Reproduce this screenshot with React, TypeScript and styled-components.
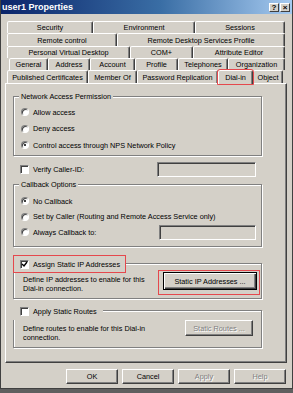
import React from "react";
import styled, { createGlobalStyle, css } from "styled-components";

const FACE = "#d4d0c8";
const RED = "#e5484d";

const GlobalStyle = createGlobalStyle`
  html, body {
    margin: 0;
    padding: 0;
    background: #5f5f5f;
  }
  body {
    font-family: "Liberation Sans", Arial, sans-serif;
    font-size: 7.3px;
    color: #000;
  }
  * {
    box-sizing: border-box;
  }
`;

type TabRowData = {
  indent: number;
  height: number;
  tabs: [string, number][];
};

const tabRows: TabRowData[] = [
  { indent: 2, height: 12, tabs: [["Security", 86], ["Environment", 102], ["Sessions", 90]] },
  { indent: 2, height: 13, tabs: [["Remote control", 110], ["Remote Desktop Services Profile", 168]] },
  { indent: 2, height: 12, tabs: [["Personal Virtual Desktop", 123], ["COM+", 63], ["Attribute Editor", 92]] },
  {
    indent: 4,
    height: 12,
    tabs: [["General", 39], ["Address", 42], ["Account", 45], ["Profile", 43], ["Telephones", 50], ["Organization", 57]],
  },
  {
    indent: 2,
    height: 13,
    tabs: [["Published Certificates", 81], ["Member Of", 49], ["Password Replication", 81], ["Dial-in", 35], ["Object", 30]],
  },
];

const CheckMark = () => (
  <svg width="7" height="7" viewBox="0 0 7 7">
    <path d="M1 3 L3 5 L6 1" stroke="#000" strokeWidth="1.4" fill="none" />
  </svg>
);

const App = () => {
  return (
    <>
      <GlobalStyle />
      <Window>
        <TitleBar>
          <Title>user1 Properties</Title>
          <Caption>
            <CaptionButton>?</CaptionButton>
            <CaptionButton>×</CaptionButton>
          </Caption>
        </TitleBar>

        <Body>
          <TabStrip>
            {tabRows.map((row, i) => (
              <TabRow key={i} $indent={row.indent} $height={row.height}>
                {row.tabs.map(([label, w]) => (
                  <Tab key={label} $w={w} $active={label === "Dial-in"}>
                    {label}
                  </Tab>
                ))}
              </TabRow>
            ))}
          </TabStrip>

          <Panel>
            <Group $top={12} $padTop={7} $padBottom={2}>
              <Legend>Network Access Permission</Legend>
              <OptionRow $h={16}>
                <Radio />
                Allow access
              </OptionRow>
              <OptionRow $h={17}>
                <Radio />
                Deny access
              </OptionRow>
              <OptionRow $h={16}>
                <Radio $checked />
                Control access through NPS Network Policy
              </OptionRow>
            </Group>

            <CallerRow>
              <Check />
              Verify Caller-ID:
              <TextBox $w={99} />
            </CallerRow>

            <Group $top={7} $padTop={8} $padBottom={6}>
              <Legend>Callback Options</Legend>
              <OptionRow $h={16}>
                <Radio $checked />
                No Callback
              </OptionRow>
              <OptionRow $h={15}>
                <Radio />
                Set by Caller (Routing and Remote Access Service only)
              </OptionRow>
              <OptionRow $h={16}>
                <Radio />
                Always Callback to:
                <TextBox $w={97} $right={5} />
              </OptionRow>
            </Group>

            <Group $top={16} $padTop={8} $padBottom={8}>
              <CheckLegend $marked>
                <Check $checked>
                  <CheckMark />
                </Check>
                Assign Static IP Addresses
              </CheckLegend>
              <DetailRow $h={18} $textTop={3} $padRight={4}>
                <Detail>
                  Define IP addresses to enable for this
                  <br />
                  Dial-in connection.
                </Detail>
                <RedFrame>
                  <PushButton $w={94} $h={18} $default>
                    Static IP Addresses ...
                  </PushButton>
                </RedFrame>
              </DetailRow>
            </Group>

            <Group $top={11} $padTop={9} $padBottom={11}>
              <CheckLegend>
                <Check />
                Apply Static Routes
              </CheckLegend>
              <DetailRow $h={16} $textTop={4} $padRight={8}>
                <Detail>
                  Define routes to enable for this Dial-in
                  <br />
                  connection.
                </Detail>
                <PushButton $w={68} $h={16} disabled>
                  Static Routes ...
                </PushButton>
              </DetailRow>
            </Group>
          </Panel>

          <ButtonBar>
            <PushButton $w={52} $h={15}>
              OK
            </PushButton>
            <PushButton $w={52} $h={15}>
              Cancel
            </PushButton>
            <PushButton $w={52} $h={15} disabled>
              Apply
            </PushButton>
            <PushButton $w={52} $h={15} disabled>
              Help
            </PushButton>
          </ButtonBar>
        </Body>
      </Window>
    </>
  );
};

export default App;

const Window = styled.div`
  width: 293px;
  height: 389px;
  background: ${FACE};
  border-left: 1px solid #404040;
  border-right: 1px solid #404040;
  border-bottom: 1px solid #404040;
  display: flex;
  flex-direction: column;
`;

const TitleBar = styled.div`
  height: 14px;
  display: flex;
  align-items: center;
  justify-content: space-between;
  padding: 0 2px 0 1px;
  background: linear-gradient(to right, #0a246a 0%, #3a6ea5 55%, #a6caf0 100%);
`;

const Title = styled.span`
  color: #fff;
  font-weight: bold;
  font-size: 9px;
`;

const Caption = styled.div`
  display: flex;
  gap: 1px;
  padding-top: 1px;
`;

const CaptionButton = styled.div`
  width: 10px;
  height: 9px;
  background: ${FACE};
  border: 1px solid;
  border-color: #fff #404040 #404040 #fff;
  display: flex;
  align-items: center;
  justify-content: center;
  font-weight: bold;
  font-size: 8px;
  line-height: 1;
`;

const Body = styled.div`
  display: flex;
  flex-direction: column;
  padding: 7px 5px 0 4px;
`;

const TabStrip = styled.div`
  display: flex;
  flex-direction: column;
`;

const TabRow = styled.div<{ $indent: number; $height: number }>`
  display: flex;
  align-items: flex-start;
  height: ${(p) => p.$height}px;
  padding-left: ${(p) => p.$indent}px;
  position: relative;
`;

const Tab = styled.div<{ $w: number; $active?: boolean }>`
  width: ${(p) => p.$w}px;
  height: 100%;
  display: flex;
  align-items: center;
  justify-content: center;
  white-space: nowrap;
  border: 1px solid;
  border-bottom: none;
  border-color: #fff #404040 transparent #fff;
  border-radius: 2px 2px 0 0;
  box-shadow: inset -1px 0 0 #808080;
  background: ${FACE};
  ${(p) =>
    p.$active &&
    css`
      position: relative;
      z-index: 2;
      height: calc(100% + 1px);
      outline: 1px solid ${RED};
      outline-offset: 0;
    `}
`;

const Panel = styled.div`
  height: 280px;
  display: flex;
  flex-direction: column;
  align-items: flex-start;
  padding: 0 0 0 7px;
  border: 1px solid;
  border-color: #fff #404040 #404040 #fff;
  box-shadow: inset -1px -1px 0 #808080;
`;

const Group = styled.div<{ $top: number; $padTop: number; $padBottom: number }>`
  position: relative;
  width: 249px;
  margin-top: ${(p) => p.$top}px;
  padding: ${(p) => p.$padTop}px 0 ${(p) => p.$padBottom}px 7px;
  border: 1px solid #808080;
  box-shadow: 1px 1px 0 #fff, inset 1px 1px 0 #fff;
  display: flex;
  flex-direction: column;
`;

const Legend = styled.div`
  position: absolute;
  top: -6px;
  left: 5px;
  padding: 0 2px;
  height: 11px;
  line-height: 11px;
  background: ${FACE};
  white-space: nowrap;
`;

const CheckLegend = styled.div<{ $marked?: boolean }>`
  position: absolute;
  top: -9px;
  left: -1px;
  height: 18px;
  display: flex;
  align-items: center;
  gap: 4px;
  padding: 0 5px 0 6px;
  background: ${FACE};
  white-space: nowrap;
  border: 1px solid ${(p) => (p.$marked ? RED : "transparent")};
`;

const OptionRow = styled.div<{ $h: number }>`
  height: ${(p) => p.$h}px;
  display: flex;
  align-items: center;
  gap: 4px;
  white-space: nowrap;
`;

const CallerRow = styled.div`
  width: 249px;
  height: 15px;
  margin-top: 6px;
  padding: 0 6px 0 7px;
  display: flex;
  align-items: center;
  gap: 4px;
`;

const Radio = styled.span<{ $checked?: boolean }>`
  width: 8px;
  height: 8px;
  flex: none;
  border-radius: 50%;
  background: #fff;
  border: 1px solid;
  border-color: #808080 #fff #fff #808080;
  box-shadow: inset 1px 1px 0 #404040;
  display: flex;
  align-items: center;
  justify-content: center;
  &::after {
    content: "";
    width: 2px;
    height: 2px;
    border-radius: 50%;
    background: ${(p) => (p.$checked ? "#000" : "transparent")};
  }
`;

const Check = styled.span<{ $checked?: boolean }>`
  width: 9px;
  height: 9px;
  flex: none;
  background: #fff;
  border: 1px solid;
  border-color: #808080 #fff #fff #808080;
  box-shadow: inset 1px 1px 0 #404040;
  display: flex;
  align-items: center;
  justify-content: center;
`;

const TextBox = styled.div<{ $w: number; $right?: number }>`
  width: ${(p) => p.$w}px;
  height: 15px;
  margin-left: auto;
  margin-right: ${(p) => p.$right ?? 0}px;
  background: ${FACE};
  border: 1px solid;
  border-color: #808080 #fff #fff #808080;
  box-shadow: inset 1px 1px 0 #404040;
`;

const DetailRow = styled.div<{ $h: number; $textTop: number; $padRight: number }>`
  height: ${(p) => p.$h}px;
  display: flex;
  justify-content: space-between;
  align-items: flex-start;
  padding-left: 2px;
  padding-right: ${(p) => p.$padRight}px;
  & > p {
    margin-top: ${(p) => p.$textTop}px;
  }
`;

const Detail = styled.p`
  margin: 0;
  line-height: 9px;
  white-space: nowrap;
`;

const RedFrame = styled.div`
  margin: -2px -3px -5px -5px;
  padding: 1px 2px 4px 4px;
  border: 1px solid ${RED};
`;

const PushButton = styled.button<{ $w: number; $h: number; $default?: boolean }>`
  width: ${(p) => p.$w}px;
  height: ${(p) => p.$h}px;
  padding: 0;
  font-family: inherit;
  font-size: 7.3px;
  color: #000;
  background: ${FACE};
  border: 1px solid;
  border-color: #fff #404040 #404040 #fff;
  box-shadow: inset -1px -1px 0 #808080;
  white-space: nowrap;
  ${(p) =>
    p.$default &&
    css`
      border: 1px solid #000;
      box-shadow: inset 1px 1px 0 #fff, inset -1px -1px 0 #404040, inset -2px -2px 0 #808080;
    `}
  &:disabled {
    color: #808080;
    text-shadow: 1px 1px 0 #fff;
  }
`;

const ButtonBar = styled.div`
  display: flex;
  justify-content: flex-end;
  gap: 4px;
  margin-top: 6px;
  padding-right: 1px;
`;
